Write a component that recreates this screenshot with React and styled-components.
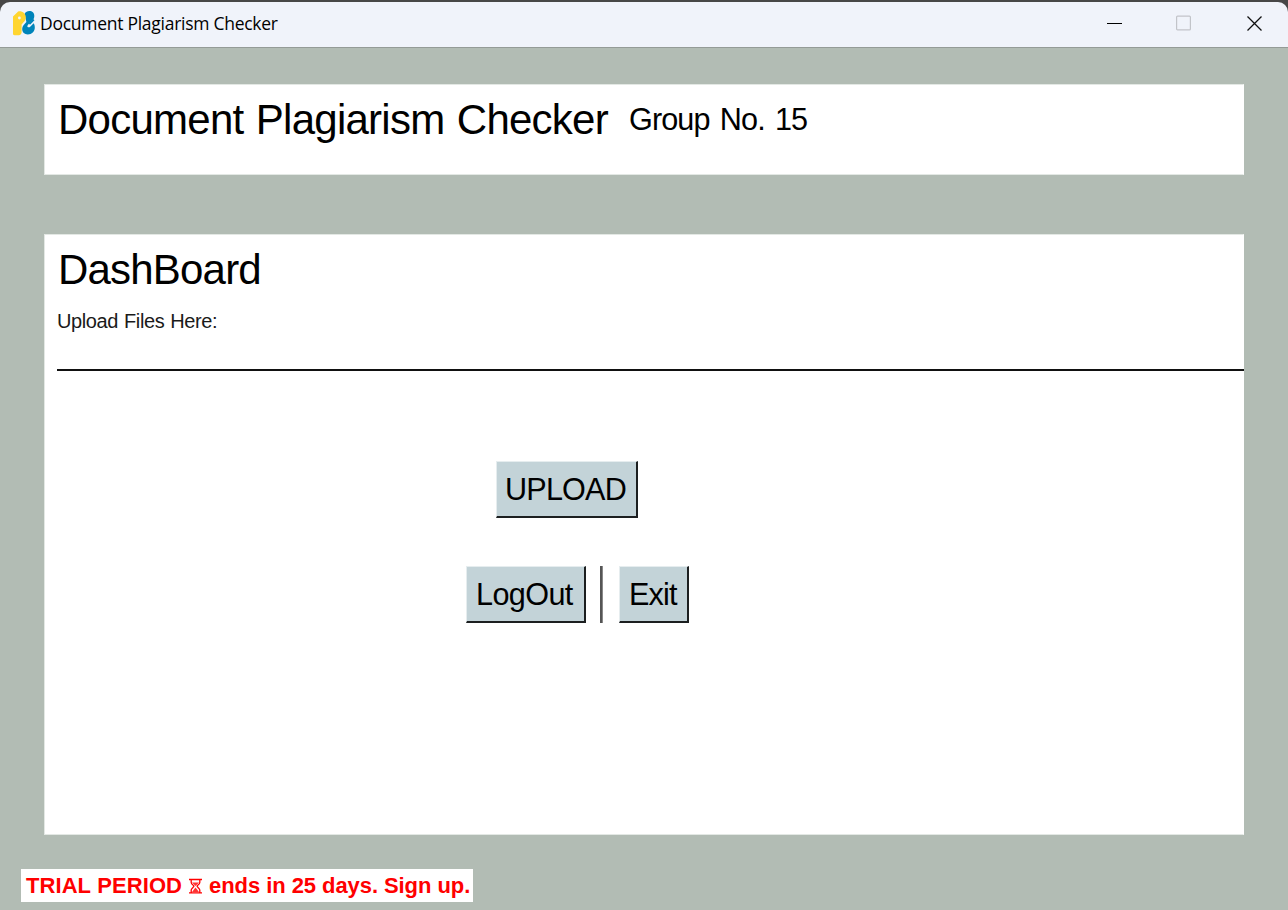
import React from "react";
import styled, { createGlobalStyle } from "styled-components";

const GlobalStyle = createGlobalStyle`
  *, *::before, *::after { box-sizing: border-box; }
  body { margin: 0; background: #474747; overflow: hidden; }
`;

const Window = styled.main`
  width: 1288px;
  height: 910px;
  padding-top: 2px;
  display: flex;
  flex-direction: column;
  background: #474747;
  color: #000;
  font-family: "Liberation Sans", Arial, sans-serif;
  font-kerning: none;
`;

const TitleBar = styled.header`
  height: 46px;
  flex: none;
  display: flex;
  align-items: center;
  padding: 0 25px 3px 12px;
  background: #f0f3fa;
  border-bottom: 1px solid #949b97;
  border-radius: 10px 10px 0 0;
`;

const WindowTitle = styled.span`
  flex: 1;
  margin-left: 5px;
  font-family: "Open Sans", "Noto Sans", sans-serif;
  font-size: 17.5px;
  line-height: 24px;
  letter-spacing: -0.27px;
`;

const Controls = styled.div`
  display: flex;
  align-items: center;
  gap: 53px;
`;

const Body = styled.div`
  flex: 1;
  display: flex;
  flex-direction: column;
  padding: 36px 44px 0;
  background: #b2bcb4;
`;

const Panel = styled.section`
  flex: none;
  height: ${(p) => p.$height}px;
  margin-bottom: ${(p) => p.$gap}px;
  padding: 11px 0 0 13px;
  background: #fff;
  border: 1px solid #e3e8e4;
  border-right-color: #fff;
`;

const HeadingRow = styled.div`
  display: flex;
  align-items: flex-start;
`;

const Heading = styled.h1`
  margin: 0;
  font-size: 42px;
  font-weight: 400;
  line-height: 48px;
  letter-spacing: ${(p) => p.$spacing}px;
  word-spacing: 1.5px;
  white-space: nowrap;
`;

const Group = styled.span`
  margin-left: 21px;
  font-size: 30.6px;
  line-height: 46px;
  letter-spacing: -0.87px;
  word-spacing: 2.5px;
  white-space: nowrap;
`;

const Caption = styled.p`
  margin: 15px 0 0 -1px;
  font-size: 20px;
  line-height: 24px;
  letter-spacing: -0.4px;
  word-spacing: 0.9px;
  color: #1a1a1a;
`;

const Rule = styled.hr`
  height: 2px;
  margin: 36px -1px 0 -1px;
  border: 0;
  background: #111;
`;

const Actions = styled.div`
  display: flex;
  margin: ${(p) => p.$top}px 0 0 ${(p) => p.$left}px;
`;

const Button = styled.button`
  width: ${(p) => p.$width}px;
  height: 57px;
  padding: 0 0 0 ${(p) => p.$inset}px;
  border: 1px solid #e6edef;
  border-right: 2px solid #1c1f20;
  border-bottom: 2px solid #1c1f20;
  background: #c3d3d8;
  color: #000;
  font-family: inherit;
  font-kerning: none;
  font-size: 30.6px;
  line-height: 36px;
  letter-spacing: ${(p) => p.$spacing}px;
  text-align: left;
  white-space: nowrap;
`;

const Separator = styled.span`
  width: 3px;
  height: 57px;
  margin: 0 16px 0 14px;
  background: #555;
  border-right: 1px solid #888;
`;

const Trial = styled.footer`
  display: flex;
  align-items: center;
  align-self: flex-start;
  width: 452px;
  height: 33px;
  margin-left: -23px;
  padding-left: 5px;
  background: #fff;
  color: #f00;
  font-size: 22px;
  font-weight: 700;
  line-height: 33px;
  white-space: nowrap;
`;

const TrialText = styled.span`
  letter-spacing: ${(p) => p.$spacing}px;
`;

const Hourglass = styled.svg`
  margin: 0 7px 0 7px;
  flex: none;
`;

function AppIcon() {
  return (
    <svg width="23" height="26" viewBox="0 -0.7 23 26" aria-hidden="true">
      <path d="M12.5 3.2C13.8 1.3 15.3.4 17.3.4c3 0 5 2 5 4.8 0 1.9-.6 3.1-1.9 4.4l-3.7 3.7c-1.3 1.3-1.6 2.2-1.1 2.9.7.8 1.8.6 3.1-.7l2.9-2.9c.9 1.2 1.2 2.5 1.2 4.2 0 4-3 7-7 7-3.2 0-5.6-2.2-5.6-5.2 0-2 .7-3.4 2.4-5.2l1.8-2Z" fill="#0084ba" />
      <path d="m21.8 9-4.4 4.4" stroke="#0084ba" strokeWidth="1.8" />
      <path d="M1 5.8 5.4 1.5C6 .7 6.5.5 7.3.5c3.9 0 6.5 2.7 6.5 6 0 2.3-1 3.9-2.5 5.4l-1.7 1.8v7.7c0 2-1.1 3.1-3 3.1H2.7C1.3 24.5 1 24 1 22.9Z" fill="#ffd530" />
      <circle cx="7.4" cy="7.3" r="1.4" fill="#f0f3fa" />
    </svg>
  );
}

export default function App() {
  return (
    <>
      <GlobalStyle />
      <Window>
        <TitleBar>
          <AppIcon />
          <WindowTitle>Document Plagiarism Checker</WindowTitle>
          <Controls>
            <svg width="16" height="16" viewBox="0 0 16 16">
              <path d="M0 8.5h15" stroke="#000" />
            </svg>
            <svg width="17" height="16" viewBox="0 -1 17 16">
              <rect x=".6" y=".1" width="13.8" height="13.8" rx="1" fill="none" stroke="#c2c4c9" strokeWidth="1.2" />
            </svg>
            <svg width="17" height="17" viewBox="0 0 17 17">
              <path d="m1.5 1.5 14 14m0-14-14 14" stroke="#111" strokeWidth="1.3" fill="none" />
            </svg>
          </Controls>
        </TitleBar>
        <Body>
          <Panel $height={91} $gap={59}>
            <HeadingRow>
              <Heading $spacing={-0.75}>Document Plagiarism Checker</Heading>
              <Group>Group No. 15</Group>
            </HeadingRow>
          </Panel>
          <Panel $height={601} $gap={34}>
            <Heading $spacing={-0.8}>DashBoard</Heading>
            <Caption>Upload Files Here:</Caption>
            <Rule />
            <Actions $top={90} $left={438}>
              <Button $width={142} $inset={8} $spacing={-0.8}>UPLOAD</Button>
            </Actions>
            <Actions $top={48} $left={408}>
              <Button $width={120} $inset={9} $spacing={-0.6}>LogOut</Button>
              <Separator />
              <Button $width={70} $inset={9} $spacing={-0.8}>Exit</Button>
            </Actions>
          </Panel>
          <Trial>
            <TrialText $spacing={0.07}>TRIAL PERIOD</TrialText>
            <Hourglass width="13" height="16" viewBox="0 0 13 16">
              <path d="M0 1.5h13M0 14.8h13M2.2 2v2.5c0 2 2.8 2.6 2.8 3.6s-2.8 2-2.8 4v2.4M10.8 2v2.5c0 2-2.8 2.6-2.8 3.6s2.8 2 2.8 4v2.4" fill="none" stroke="#f00" strokeWidth="1.3" />
              <path d="M3 4.5h7L6.5 8ZM6.5 9.5 10 14H3Z" fill="#f00" opacity=".8" />
            </Hourglass>
            <TrialText $spacing={-0.07}>ends in 25 days. Sign up.</TrialText>
          </Trial>
        </Body>
      </Window>
    </>
  );
}
